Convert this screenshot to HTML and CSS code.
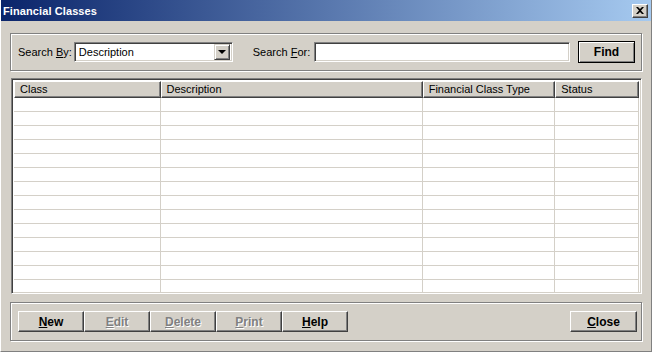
FILE: index.html
```html
<!DOCTYPE html>
<html>
<head>
    <title>Financial Classes</title>
    <link rel="stylesheet" href="styles.css">
</head>
<body>
    <div class="window">
        <div class="titlebar">
            <span class="title">Financial Classes</span>
            <button class="close-x" type="button">
                <svg width="8" height="7" viewBox="0 0 8 7"><path d="M0 0h2l2 2 2-2h2L5 3.5 8 7H6L4 5 2 7H0l3-3.5z" fill="#000"/></svg>
            </button>
        </div>
        <div class="content">
            <div class="group search-group">
                <label class="lbl">Search <u>B</u>y:</label>
                <div class="combo">
                    <span class="combo-text">Description</span>
                    <span class="combo-btn"><span class="arrow"></span></span>
                </div>
                <label class="lbl lbl-for">Search <u>F</u>or:</label>
                <div class="field"></div>
                <button class="btn btn-default" type="button">Find</button>
            </div>

            <div class="grid">
                <div class="grid-head">
                    <div class="hcell c1">Class</div>
                    <div class="hcell c2">Description</div>
                    <div class="hcell c3">Financial Class Type</div>
                    <div class="hcell c4">Status</div>
                </div>
                <div class="grid-body" id="rows"></div>
            </div>

            <div class="group button-group">
                <div class="bar">
                    <button class="btn tool" type="button"><u>N</u>ew</button>
                    <button class="btn tool disabled" type="button"><u>E</u>dit</button>
                    <button class="btn tool disabled" type="button"><u>D</u>elete</button>
                    <button class="btn tool disabled" type="button"><u>P</u>rint</button>
                    <button class="btn tool" type="button"><u>H</u>elp</button>
                </div>
                <button class="btn close-btn" type="button"><u>C</u>lose</button>
            </div>
        </div>
    </div>

    <script>
        // Fill the empty list with blank rows
        const rows = document.getElementById('rows');
        for (let i = 0; i < 14; i++) {
            const row = document.createElement('div');
            row.className = 'row';
            ['c1', 'c2', 'c3', 'c4'].forEach(c => {
                const cell = document.createElement('div');
                cell.className = 'cell ' + c;
                row.appendChild(cell);
            });
            rows.appendChild(row);
        }
    </script>
</body>
</html>
```

FILE: styles.css
```css
body {
    margin: 0;
    font-family: "Liberation Sans", Arial, sans-serif;
    font-size: 11px;
    color: #000;
}
.window {
    width: 652px;
    height: 352px;
    box-sizing: border-box;
    background: #D4D0C8;
    border-left: 1px solid #fff;
    border-right: 1px solid #808080;
    border-bottom: 1px solid #808080;
    overflow: hidden;
}
.titlebar {
    height: 21px;
    display: flex;
    align-items: center;
    justify-content: space-between;
    padding: 0 4px 0 3px;
    background: linear-gradient(to right, #0A246A, #A6CAF0);
    margin-left: -1px;
    margin-right: -1px;
}
.title {
    color: #fff;
    font-weight: bold;
    font-size: 11px;
    letter-spacing: 0.1px;
}
.close-x {
    width: 16px;
    height: 14px;
    padding: 0;
    display: flex;
    align-items: center;
    justify-content: center;
    background: #D4D0C8;
    border: 1px solid;
    border-color: #fff #404040 #404040 #fff;
    box-shadow: inset -1px -1px #808080;
}
.content {
    padding: 12px 9px 0 9px;
}
.group {
    border: 1px solid #808080;
    box-shadow: inset 1px 1px #fff, 1px 1px #fff;
    display: flex;
    align-items: center;
}
.search-group {
    height: 38px;
    box-sizing: border-box;
    padding: 0 6px 0 7px;
}
.lbl {
    white-space: nowrap;
}
.combo {
    margin-left: 2px;
    width: 159px;
    height: 20px;
    box-sizing: border-box;
    background: #fff;
    border: 1px solid;
    border-color: #808080 #fff #fff #808080;
    box-shadow: inset 1px 1px #404040, inset -1px -1px #D4D0C8;
    display: flex;
    align-items: center;
    justify-content: space-between;
    padding: 2px;
}
.combo-text {
    padding-left: 2px;
}
.combo-btn {
    width: 16px;
    height: 16px;
    box-sizing: border-box;
    background: #D4D0C8;
    border: 1px solid;
    border-color: #D4D0C8 #404040 #404040 #D4D0C8;
    box-shadow: inset 1px 1px #fff, inset -1px -1px #808080;
    display: flex;
    align-items: center;
    justify-content: center;
}
.arrow {
    width: 0;
    height: 0;
    border-left: 4px solid transparent;
    border-right: 4px solid transparent;
    border-top: 4px solid #000;
}
.lbl-for {
    margin-left: 20px;
}
.field {
    margin-left: 4px;
    width: 256px;
    height: 20px;
    box-sizing: border-box;
    background: #fff;
    border: 1px solid;
    border-color: #808080 #fff #fff #808080;
    box-shadow: inset 1px 1px #404040, inset -1px -1px #D4D0C8;
}
.btn {
    font-family: "Liberation Sans", Arial, sans-serif;
    font-size: 12px;
    font-weight: bold;
    background: #D4D0C8;
    border: 1px solid;
    border-color: #fff #404040 #404040 #fff;
    box-shadow: inset -1px -1px #808080;
    padding: 0;
    color: #000;
}
.btn-default {
    margin-left: 8px;
    width: 57px;
    height: 22px;
    border-color: #000;
    box-shadow: inset 1px 1px #fff, inset -1px -1px #808080;
}
.grid {
    margin-top: 7px;
    margin-left: 1px;
    width: 631px;
    height: 216px;
    box-sizing: border-box;
    background: #fff;
    border: 1px solid;
    border-color: #808080 #fff #fff #808080;
    box-shadow: inset 1px 1px #404040, inset -1px -1px #D4D0C8;
    padding: 2px 2px 0 2px;
    overflow: hidden;
}
.grid-head {
    display: flex;
    height: 17px;
}
.hcell {
    box-sizing: border-box;
    height: 17px;
    line-height: 15px;
    padding-left: 5px;
    background: #D4D0C8;
    border: 1px solid;
    border-color: #fff #404040 #404040 #fff;
    box-shadow: inset -1px -1px #808080;
    white-space: nowrap;
}
.c1 { width: 147px; }
.c2 { width: 263px; }
.c3 { width: 133px; }
.c4 { width: 84px; }
.row {
    display: flex;
    height: 14px;
}
.cell {
    box-sizing: border-box;
    height: 14px;
    border-bottom: 1px solid #D4D0C8;
    border-right: 1px solid #D4D0C8;
}
.button-group {
    margin-top: 8px;
    height: 39px;
    box-sizing: border-box;
    padding: 0 4px 0 7px;
    justify-content: space-between;
}
.bar {
    display: flex;
}
.tool {
    width: 66px;
    height: 21px;
}
.disabled {
    color: #808080;
    text-shadow: 1px 1px #fff;
}
.close-btn {
    width: 67px;
    height: 21px;
}
```
